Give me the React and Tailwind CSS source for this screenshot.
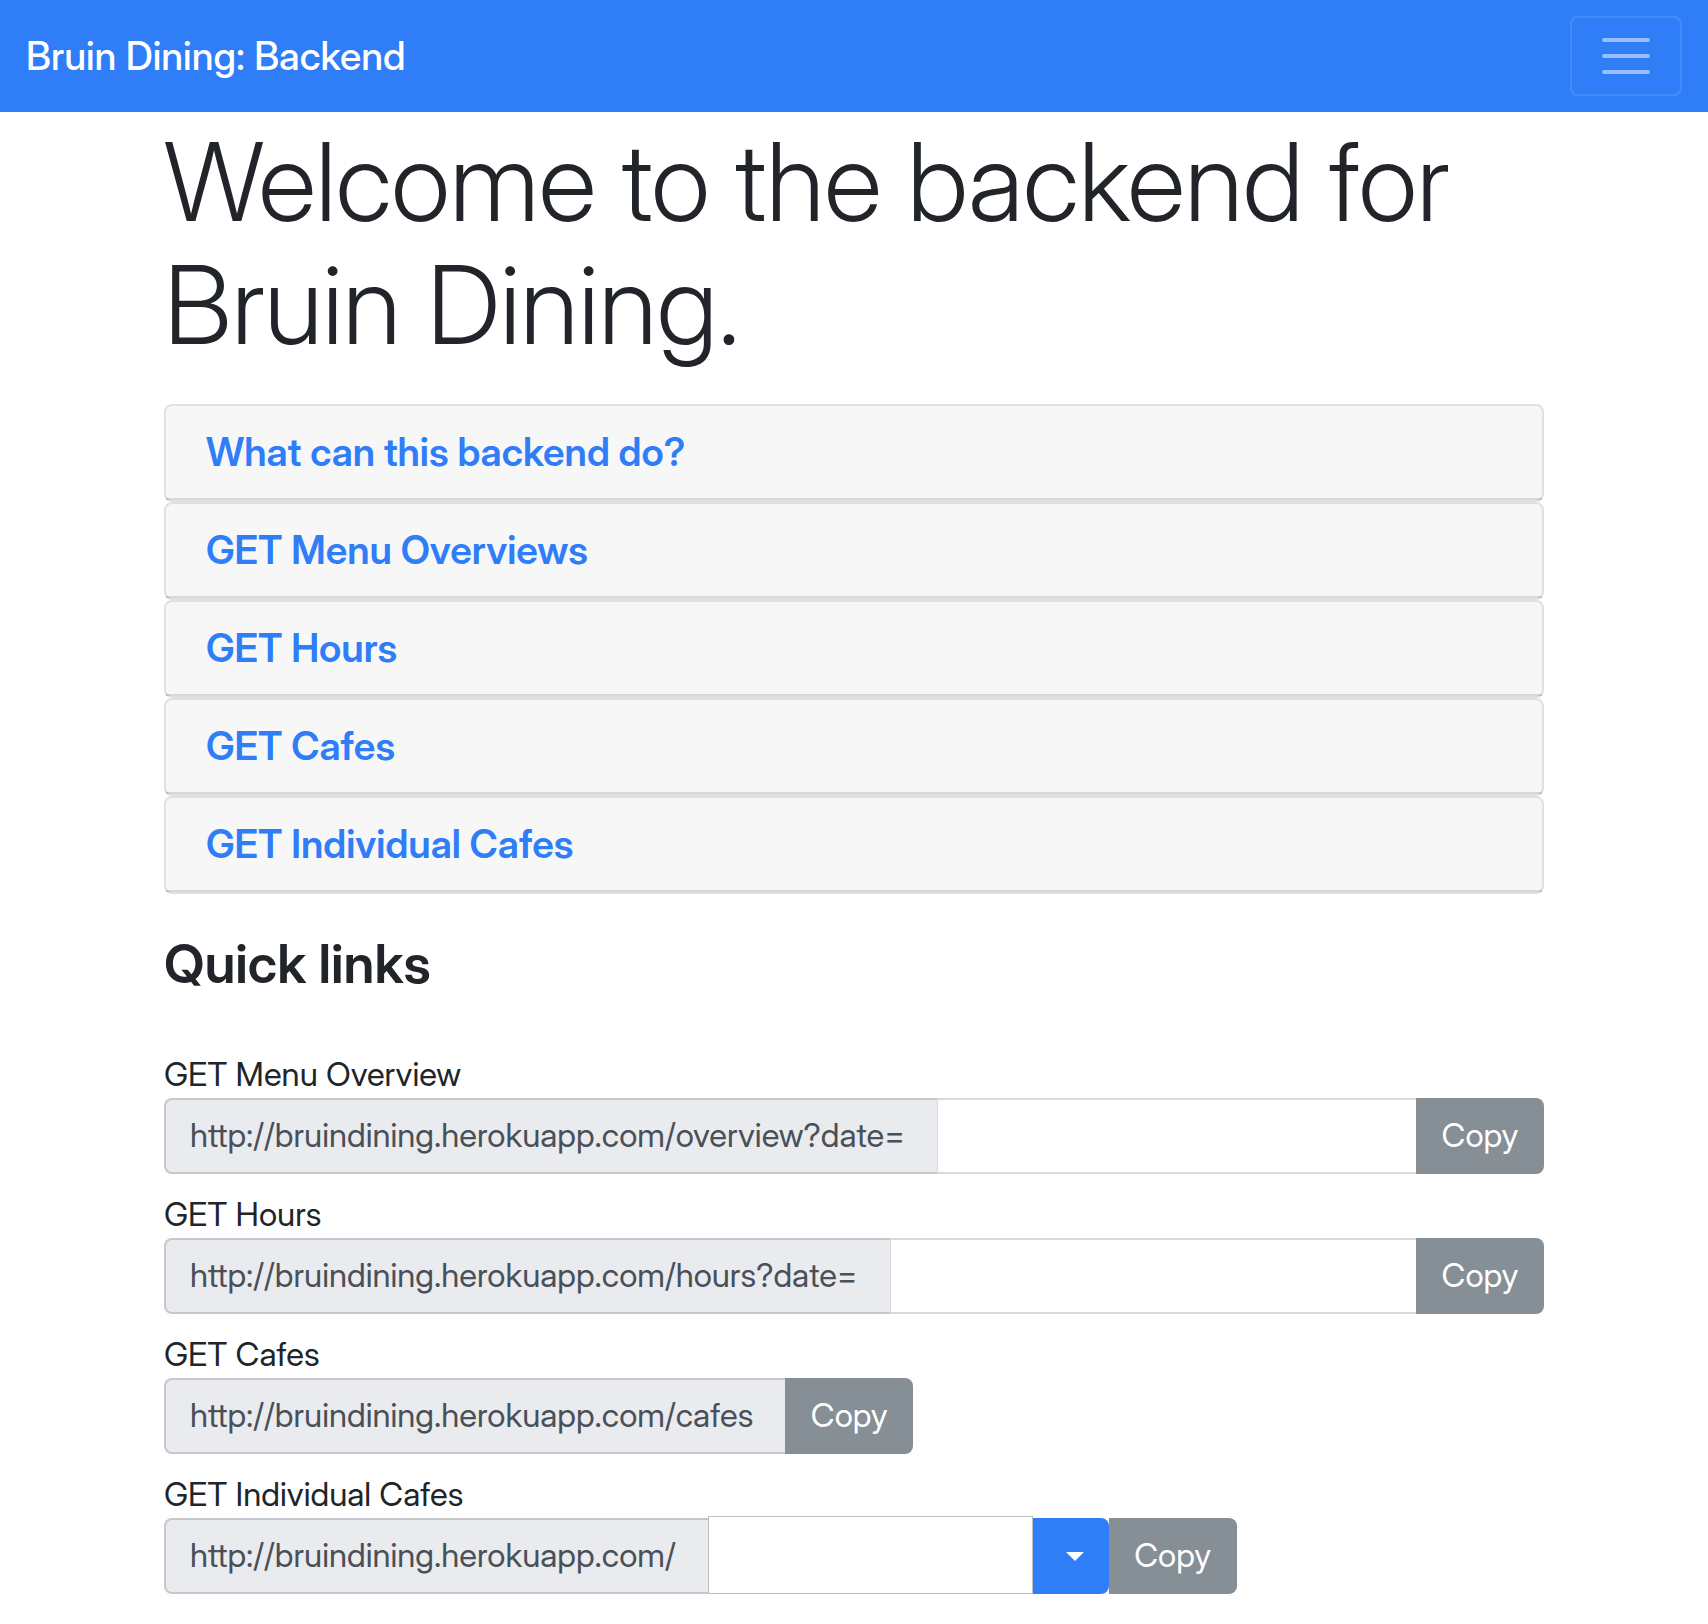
import React from "react";

const sections = [
  "What can this backend do?",
  "GET Menu Overviews",
  "GET Hours",
  "GET Cafes",
  "GET Individual Cafes",
];

const HOST = "http://bruindining.herokuapp.com/";

function Prefix({ children, id }) {
  const Tag = id ? "label" : "span";
  return (
    <Tag htmlFor={id} className="flex items-center rounded-l-lg border-2 border-r-0 border-black/15 bg-[#eaebef] pr-8 pl-6 text-[#495057]">
      {children}
    </Tag>
  );
}

function DateInput({ id }) {
  return <input id={id} type="text" className="min-w-0 flex-1 border-y-2 border-l-1 border-black/15 px-6" />;
}

function CopyButton() {
  return (
    <button type="button" className="w-32 rounded-r-lg bg-[#868e96] text-white">
      Copy
    </button>
  );
}

function Row({ title, children }) {
  return (
    <div className="pb-4">
      <div className="h-12 leading-12">{title}</div>
      <div className="flex h-19">{children}</div>
    </div>
  );
}

export default function App() {
  return (
    <div className="min-h-screen bg-white font-['Inter_Display','Inter',sans-serif] text-[33px] text-[#212529]">
      <nav className="flex h-28 items-center justify-between bg-[#2f7df7] px-[26px]">
        <a href="#" className="text-[39px] font-medium text-white">Bruin Dining: Backend</a>
        <button type="button" aria-label="Toggle navigation" className="flex h-20 w-28 items-center justify-center rounded-lg border-2 border-white/10">
          <svg width="60" height="60" viewBox="0 0 30 30" fill="none" stroke="#fff" strokeOpacity=".5" strokeWidth="2" strokeLinecap="round">
            <path d="M4 7h22M4 15h22M4 23h22" />
          </svg>
        </button>
      </nav>
      <main className="mx-auto w-full px-[164px]">
        <h1 className="pt-2 text-[108px] leading-[123px] font-light">
          Welcome to the backend for Bruin Dining.
        </h1>
        <div className="mt-[38px]">
          {sections.map((s) => (
            <div key={s} className="h-[98px] rounded-lg border-2 border-black/12">
              <h2 className="flex h-full items-center rounded-t-md border-b-2 border-black/12 bg-black/3 px-10 text-[39px] font-semibold">
                <a href="#" className="text-[#2f7df7]">{s}</a>
              </h2>
            </div>
          ))}
        </div>
        <h2 className="mt-[39px] mb-[55px] text-[54px] leading-[62px] font-semibold">
          Quick links
        </h2>
        <Row title="GET Menu Overview">
          <Prefix id="overview">{HOST}overview?date=</Prefix>
          <DateInput id="overview" />
          <CopyButton />
        </Row>
        <Row title="GET Hours">
          <Prefix id="hours">{HOST}hours?date=</Prefix>
          <DateInput id="hours" />
          <CopyButton />
        </Row>
        <Row title="GET Cafes">
          <Prefix>{HOST}cafes</Prefix>
          <CopyButton />
        </Row>
        <Row title="GET Individual Cafes">
          <Prefix id="cafe">{HOST}</Prefix>
          <input id="cafe" type="text" className="-mt-0.5 w-[325px] border border-[#bfbfbf] px-6" />
          <button type="button" aria-label="Choose cafe" className="flex w-19 items-center justify-center rounded-r-lg bg-[#2f7df7] pl-2">
            <svg width="18" height="9" viewBox="0 0 18 9" fill="#fff">
              <path d="M0 0h18L9 9z" />
            </svg>
          </button>
          <CopyButton />
        </Row>
      </main>
    </div>
  );
}
